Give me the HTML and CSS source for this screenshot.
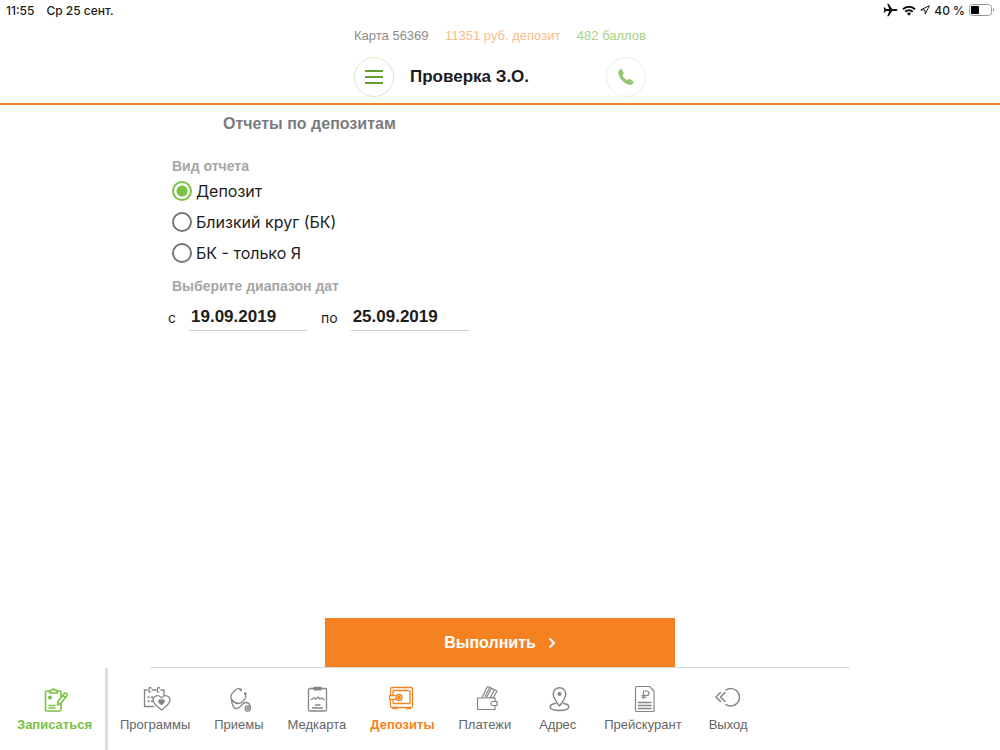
FILE: index.html
```html
<!DOCTYPE html>
<html lang="ru">
<head>
  <meta charset="UTF-8">
  <meta name="viewport" content="width=device-width, initial-scale=1.0">
  <title>Отчеты по депозитам</title>
  <link rel="stylesheet" href="styles.css">
</head>
<body>
  <div class="status-bar">
    <div class="status-left">
      <span>11:55</span>
      <span>Ср 25 сент.</span>
    </div>
    <div class="status-right">
      <svg width="15" height="14" viewBox="0 0 15 14"><path d="M14.500 7c0-.6-.8-1-1.800-1H9.300L5.600.8H4.200L6.200 6H3L1.800 4.500H.6L1.300 7 .6 9.500h1.200L3 8h3.200l-2 5.200h1.400L9.300 8h3.400c1 0 1.800-.4 1.800-1z" fill="#111"/></svg>
      <svg width="14" height="11" viewBox="0 0 14 11" fill="none" stroke="#111" stroke-width="2"><path d="M1 4.200a8.500 8.500 0 0 1 12 0M3.300 6.700a5.200 5.200 0 0 1 7.400 0"/><path d="M7 10.800 4.900 8.600a3 3 0 0 1 4.200 0z" fill="#111" stroke="none"/></svg>
      <svg width="10" height="10" viewBox="0 0 10 10" fill="none" stroke="#222" stroke-width="1" stroke-linejoin="round"><path d="M9.300.7.700 4.900h4.200l.4 4.300z"/></svg>
      <span>40 %</span>
      <svg width="26" height="12" viewBox="0 0 26 12"><rect x=".5" y=".5" width="22" height="11" rx="3" fill="none" stroke="#999"/><rect x="2" y="2" width="8" height="8" rx="1" fill="#000"/><path d="M24 4v4c1.600-.6 1.600-3.400 0-4z" fill="#999"/></svg>
    </div>
  </div>

  <header class="header">
    <div class="header-inner">
      <div class="account">
        <span class="card-number">Карта 56369</span>
        <span class="deposit">11351 руб. депозит</span>
        <span class="points">482 баллов</span>
      </div>
      <div class="header-row">
        <button class="round-btn" type="button" aria-label="Меню">
          <svg width="18" height="14" viewBox="0 0 18 14" stroke="#5fa02c" stroke-width="2"><path d="M0 1h18M0 7h18M0 13h18"/></svg>
        </button>
        <h1>Проверка З.О.</h1>
        <button class="round-btn phone-btn" type="button" aria-label="Позвонить">
          <svg width="18" height="18" viewBox="0 0 18 18"><path d="M1.500 3.300C1.800 2 3 1 4.100 1.200c.6.100.9.500 1.200 1l1.200 2.200c.4.800.2 1.500-.4 2l-.8.800c1 2.100 2.700 3.900 4.900 5l.9-.8c.6-.5 1.300-.5 1.900-.1l2.700 1.700c.8.500 1 1.200.6 1.900-.7 1.500-2.300 2.200-4 1.800C7 15.500 2.200 10.500 1.300 5.200c-.1-.7 0-1.300.2-1.900z" fill="#93c572"/></svg>
        </button>
      </div>
    </div>
  </header>

  <main class="content">
    <form class="report">
      <h2>Отчеты по депозитам</h2>

      <fieldset>
        <legend>Вид отчета</legend>
        <label class="radio"><input type="radio" name="kind" checked>Депозит</label>
        <label class="radio"><input type="radio" name="kind">Близкий круг (БК)</label>
        <label class="radio"><input type="radio" name="kind">БК - только Я</label>
      </fieldset>

      <fieldset>
        <legend>Выберите диапазон дат</legend>
        <div class="dates">
          <label for="from">с</label>
          <input id="from" type="text" value="19.09.2019">
          <label for="to">по</label>
          <input id="to" type="text" value="25.09.2019">
        </div>
      </fieldset>

      <div class="actions">
        <button class="submit" type="button">
          Выполнить
          <svg width="8" height="12" viewBox="0 0 8 12" fill="none" stroke="#fff" stroke-width="2"><path d="m1.500 1.500 4.500 4.500-4.500 4.500"/></svg>
        </button>
      </div>
    </form>
  </main>

  <nav class="tabs">
    <a class="tab signup" href="#">
      <svg viewBox="0 0 28 28" stroke-width="1.600">
        <path d="M8.500 6H6a1.500 1.500 0 0 0-1.500 1.500v17A1.500 1.500 0 0 0 6 26h12.500a1.500 1.500 0 0 0 1.500-1.500V19M16 6h2.500A1.500 1.500 0 0 1 20 7.500v4"/>
        <path d="M8.500 8V5.500h2a2 2 0 0 1 3.800 0h2V8zM8 20.500h6M8 23h6M16.500 20l.8-4 6-7.500c1.200-1.200 3.500.3 2.600 2l-5.900 7.700zM21.800 10.500l2.800 2"/>
        <circle cx="9" cy="12.500" r="1.200" fill="currentColor"/>
      </svg>
      <span>Записаться</span>
    </a>
    <a class="tab" href="#">
      <svg viewBox="0 0 28 28" stroke-width="1.300">
        <path d="M12.500 21.500H3.500V5H6M11 5h4M20 5h3v5"/>
        <path d="M10 3c-1.200-1.200-2.300-.2-2.200 1.700 0 1.700.6 2.500 1.500 2.500M18.500 3c-1.200-1.200-2.300-.2-2.200 1.700 0 1.700.6 2.500 1.500 2.500"/>
        <path d="M7.500 12.200h.2M7.500 16.200h.2M11 12.200h.2M11 16.200h.2" stroke-width="2"/>
        <path d="M20.500 25c-5.500-4-8.500-6.500-8.500-10 0-4.500 6-6 8.500-2 2.500-4 8.500-2.500 8.500 2 0 3.500-3 6-8.500 10z"/>
        <path d="M20.500 19.500c-1.800-1.200-2.700-2-2.700-3.200 0-1.700 1.900-1.900 2.700-.6.800-1.300 2.700-1.100 2.700.6 0 1.200-.9 2-2.700 3.200z" fill="currentColor"/>
      </svg>
      <span>Программы</span>
    </a>
    <a class="tab" href="#">
      <svg viewBox="0 0 28 28" stroke-width="1.300">
        <path d="M15.500 4.500c-1-1.500-3-1-4.800.3C7.500 7.300 5.700 10.500 6 13c.3 2.200 4.500 5.500 7 5.500 3.200 0 7.300-4 7.700-6.700.2-1.400-.2-2.400-1-3.300"/>
        <circle cx="15.800" cy="4.800" r=".7"/><circle cx="20.300" cy="8.500" r=".7"/>
        <path d="M6.500 14.500c.3 5 2.200 9.500 5.200 9.200 4.300-.4 5-6.200 8.800-6.200 3 0 4.800 1.800 4.600 4.500"/>
        <path d="M6.300 14c1.500 2.800 3.700 4.400 6.700 4.500"/>
        <circle cx="22.800" cy="23.500" r="2.600"/><circle cx="22.800" cy="23.500" r=".8"/>
      </svg>
      <span>Приемы</span>
    </a>
    <a class="tab" href="#">
      <svg viewBox="0 0 28 28" stroke-width="1.300">
        <rect x="5.500" y="3.500" width="18" height="22.500" rx="1.500"/>
        <path d="M11 2.500h7v2.300h-7z" fill="currentColor"/>
        <path d="M8.500 14.500c1-.1 1.500-1.700 2.500-1.700s1.200 1.300 2 1.300 1.200-2 2.200-2 1 2 1.800 2 1-1.300 1.700-1.300 1 1.700 2.300 1.700M12.500 20h4.500M9.500 23h10"/>
      </svg>
      <span>Медкарта</span>
    </a>
    <a class="tab active" href="#">
      <svg viewBox="0 0 28 28" stroke-width="1.300">
        <path d="M2.500 10.500V4A1.500 1.500 0 0 1 4 2.500h19A1.500 1.500 0 0 1 24.500 4v17a1.500 1.500 0 0 1-1.500 1.500H4A1.500 1.500 0 0 1 2.500 21v-6.500"/>
        <path d="M5 10V6.500A1 1 0 0 1 6 5.500h15a1 1 0 0 1 1 1v11a1 1 0 0 1-1 1H6a1 1 0 0 1-1-1V15M8 10.700H1.500v3.600H8M5 23.500h4M18.500 23.500h4"/>
        <circle cx="11" cy="12.500" r="3"/><circle cx="11" cy="12.500" r="1.200" fill="currentColor"/>
      </svg>
      <span>Депозиты</span>
    </a>
    <a class="tab" href="#">
      <svg viewBox="0 0 28 28" stroke-width="1.200">
        <path d="M24 16V13H6.500v11.500H24V21"/>
        <path d="M21.500 16.500H26V20.500h-4.500c-2 0-2-4 0-4zM11 12.500l5.500-11 4 1.800L15.500 12.500M14 11.500l5-9.300M18.500 12.500h4L26 6l-5.500-2.700M23 5.500l-3.500 6.500"/>
      </svg>
      <span>Платежи</span>
    </a>
    <a class="tab" href="#">
      <svg viewBox="0 0 28 28" stroke-width="1.400">
        <path d="M15.500 21c-4-5-6.300-8.500-6.300-12a6.300 6.300 0 0 1 12.600 0c0 3.500-2.300 7-6.300 12z"/>
        <circle cx="15.500" cy="9" r="1.300" fill="currentColor"/>
        <path d="M11.500 18.500c-3 .4-5.300 1.600-5.300 3.200 0 5 18.600 5 18.600 0 0-1.600-2.300-2.800-5.300-3.200"/>
      </svg>
      <span>Адрес</span>
    </a>
    <a class="tab" href="#">
      <svg viewBox="0 0 28 28" stroke-width="1.200">
        <path d="M8 1.500h12.500l4.500 4.500v19.500a1 1 0 0 1-1 1H8A1.500 1.500 0 0 1 6.500 25V3A1.500 1.500 0 0 1 8 1.500z"/>
        <path d="M14.500 13.500v-7.500h3c3.200 0 3.200 4.500 0 4.500h-4.500M13 12.200h4"/>
        <path d="M9.500 17.500h12.500M9.500 20.500h12.500M9.500 23.500h12.500" stroke-width="1.500"/>
      </svg>
      <span>Прейскурант</span>
    </a>
    <a class="tab" href="#">
      <svg viewBox="0 0 28 28" stroke-width="1.500">
        <path d="M12 5a8.700 8.700 0 1 1 0 14.500M6.500 7.500 2 12l4.500 4.500M11 7.500 6.500 12l4.500 4.500"/>
      </svg>
      <span>Выход</span>
    </a>
  </nav>
</body>
</html>
```

FILE: styles.css
```css
*, *::before, *::after {
  box-sizing: border-box;
}

body {
  margin: 0;
  min-height: 100vh;
  display: flex;
  flex-direction: column;
  font-family: "Liberation Sans", Arial, sans-serif;
  background: #fff;
  color: #1c1c1c;
}

h1, h2, fieldset, legend {
  margin: 0;
  padding: 0;
  border: none;
}

button, input {
  font-family: inherit;
}

/* status bar */
.status-bar {
  display: flex;
  justify-content: space-between;
  align-items: center;
  height: 20px;
  padding: 0 5px 0 6px;
  font-family: Inter, sans-serif;
  font-size: 12px;
  font-weight: 500;
}

.status-left {
  display: flex;
  gap: 12px;
}

.status-right {
  display: flex;
  align-items: center;
  gap: 4px;
}

/* header */
.header {
  height: 85px;
  padding-top: 8px;
  border-bottom: 2px solid #f58220;
}

.header-inner {
  width: 292px;
  margin: 0 auto;
}

.account {
  display: flex;
  justify-content: space-between;
  font-size: 13px;
  line-height: 16px;
  white-space: nowrap;
}

.card-number {
  color: #8c8c8c;
}

.deposit {
  color: #f9bc8a;
}

.points {
  color: #a5d281;
}

.header-row {
  display: flex;
  align-items: center;
  gap: 16px;
  margin-top: 13px;
}

.header-row h1 {
  font-size: 17px;
  white-space: nowrap;
}

.round-btn {
  display: flex;
  align-items: center;
  justify-content: center;
  width: 40px;
  height: 40px;
  padding: 0;
  border: 1px solid #d9ebcb;
  border-radius: 50%;
  background: #fff;
}

.phone-btn {
  margin-left: auto;
  border-color: #e8f1e2;
}

/* report form */
.content {
  flex: 1;
  display: flex;
  justify-content: center;
}

.report {
  width: 70%;
  display: flex;
  flex-direction: column;
  border-bottom: 1px solid #d8d8d8;
}

.report h2 {
  margin: 9px 0 23px 73px;
  font-size: 16px;
  line-height: 20px;
  color: #7b7b7b;
}

.report fieldset {
  padding-left: 22px;
}

.report legend {
  font-size: 14px;
  font-weight: bold;
  line-height: 18px;
  color: #a6a6a6;
}

.radio {
  display: flex;
  align-items: center;
  gap: 4px;
  height: 31px;
  font-family: Inter, sans-serif;
  font-size: 16px;
}

.radio input {
  appearance: none;
  width: 20px;
  height: 20px;
  margin: 0;
  border: 2px solid #757575;
  border-radius: 50%;
}

.radio input:checked {
  border-color: #7cc142;
  background: radial-gradient(circle, #7cc142 5px, #fff 6px);
}

.report fieldset + fieldset {
  margin-top: 9px;
}

.dates {
  display: flex;
  align-items: center;
  margin: 8px 0 0 -4px;
  font-family: Inter, sans-serif;
  font-size: 14px;
}

.dates input {
  width: 118px;
  height: 28px;
  margin: 0 14px 0 13px;
  padding: 0 2px;
  border: none;
  border-bottom: 1px solid #ccc;
  background: none;
  font-family: "Liberation Sans", Arial, sans-serif;
  font-size: 17px;
  font-weight: bold;
  color: #1c1c1c;
}

.actions {
  margin-top: auto;
  display: flex;
  justify-content: center;
}

.submit {
  display: flex;
  align-items: center;
  justify-content: center;
  gap: 12px;
  width: 50%;
  height: 49px;
  border: none;
  background: #f58220;
  color: #fff;
  font-size: 16px;
  font-weight: bold;
}

/* bottom tabs */
.tabs {
  display: flex;
  height: 82px;
}

.tab {
  display: flex;
  flex-direction: column;
  align-items: center;
  gap: 3px;
  min-width: 69px;
  padding: 17px 12px 0;
  font-size: 13px;
  line-height: 18px;
  color: #666;
  text-decoration: none;
}

.tab svg {
  width: 28px;
  height: 28px;
  overflow: visible;
  fill: none;
  stroke: #858585;
  color: #858585;
  stroke-linecap: round;
  stroke-linejoin: round;
}

.tab.signup {
  width: 108px;
  padding: 17px 0 0 4px;
  border-right: 3px solid #ddd;
  color: #7cc142;
  font-weight: bold;
}

.tab.active {
  color: #f58220;
  font-weight: bold;
}

.tab.signup svg,
.tab.active svg {
  color: inherit;
  stroke: currentColor;
}
```
